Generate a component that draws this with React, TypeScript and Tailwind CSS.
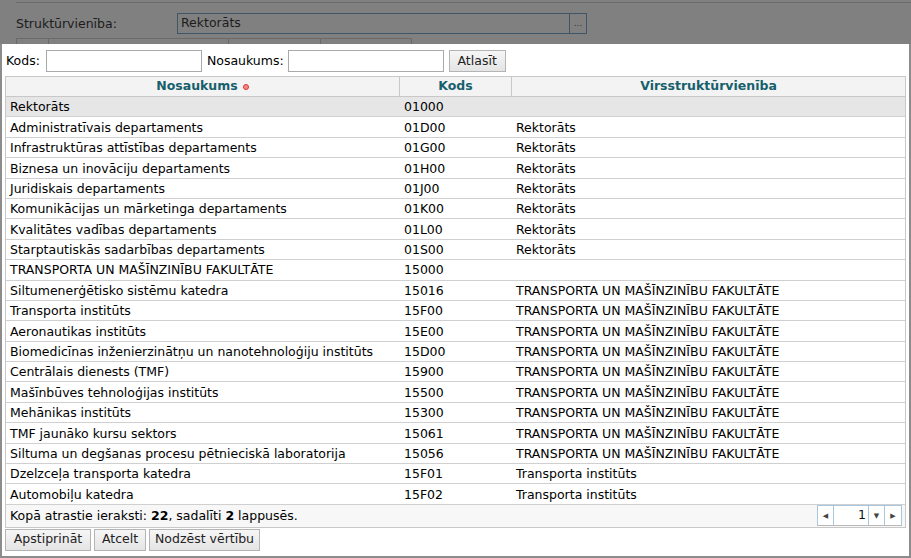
import React from 'react'

const ROWS: [string, string, string][] = [
  ['Rektorāts', '01000', ''],
  ['Administratīvais departaments', '01D00', 'Rektorāts'],
  ['Infrastruktūras attīstības departaments', '01G00', 'Rektorāts'],
  ['Biznesa un inovāciju departaments', '01H00', 'Rektorāts'],
  ['Juridiskais departaments', '01J00', 'Rektorāts'],
  ['Komunikācijas un mārketinga departaments', '01K00', 'Rektorāts'],
  ['Kvalitātes vadības departaments', '01L00', 'Rektorāts'],
  ['Starptautiskās sadarbības departaments', '01S00', 'Rektorāts'],
  ['TRANSPORTA UN MAŠĪNZINĪBU FAKULTĀTE', '15000', ''],
  ['Siltumenerģētisko sistēmu katedra', '15016', 'TRANSPORTA UN MAŠĪNZINĪBU FAKULTĀTE'],
  ['Transporta institūts', '15F00', 'TRANSPORTA UN MAŠĪNZINĪBU FAKULTĀTE'],
  ['Aeronautikas institūts', '15E00', 'TRANSPORTA UN MAŠĪNZINĪBU FAKULTĀTE'],
  ['Biomedicīnas inženierzinātņu un nanotehnoloģiju institūts', '15D00', 'TRANSPORTA UN MAŠĪNZINĪBU FAKULTĀTE'],
  ['Centrālais dienests (TMF)', '15900', 'TRANSPORTA UN MAŠĪNZINĪBU FAKULTĀTE'],
  ['Mašīnbūves tehnoloģijas institūts', '15500', 'TRANSPORTA UN MAŠĪNZINĪBU FAKULTĀTE'],
  ['Mehānikas institūts', '15300', 'TRANSPORTA UN MAŠĪNZINĪBU FAKULTĀTE'],
  ['TMF jaunāko kursu sektors', '15061', 'TRANSPORTA UN MAŠĪNZINĪBU FAKULTĀTE'],
  ['Siltuma un degšanas procesu pētnieciskā laboratorija', '15056', 'TRANSPORTA UN MAŠĪNZINĪBU FAKULTĀTE'],
  ['Dzelzceļa transporta katedra', '15F01', 'Transporta institūts'],
  ['Automobiļu katedra', '15F02', 'Transporta institūts'],
]

function Btn({ children, className = '' }: { children: React.ReactNode; className?: string }) {
  return (
    <button
      className={`h-[22px] whitespace-nowrap border border-[#b4b4b4] bg-gradient-to-b from-[#f6f6f6] to-[#e4e4e4] px-0 text-[12.5px] text-[#222] ${className}`}
    >
      {children}
    </button>
  )
}

export default function App() {
  return (
    <div
      className="flex h-[558px] w-[911px] flex-col overflow-hidden bg-[#808080] text-[12.5px] text-black"
      style={{ fontFamily: '"DejaVu Sans", Verdana, sans-serif' }}
    >
      {/* Page behind the modal (dimmed) */}
      <div className="h-[44px] shrink-0 overflow-hidden pt-[2px]">
        <div className="ml-[16px] h-[1px] bg-[#6a6a6a]" />
        <div className="mt-[10px] flex items-center">
          <span className="ml-[16px] w-[161px] pt-[2px] text-[#1c1c1c]">Struktūrvienība:</span>
          <div className="flex h-[21px] w-[393px] items-center border border-[#3f5668] pl-[3px] text-[#1c1c1c]">
            Rektorāts
          </div>
          <div className="flex h-[21px] w-[17px] items-center justify-center border border-l-0 border-[#3f5668] text-[9px] leading-none text-[#333]">
            ...
          </div>
        </div>
        <div className="ml-[16px] mt-[4px] flex h-[10px]">
          <div className="w-[33px] border border-[#6a6a6a]" />
          <div className="w-[180px] border border-l-0 border-[#6a6a6a]" />
          <div className="w-[92px] border border-l-0 border-[#6a6a6a]" />
          <div className="w-[91px] border border-l-0 border-[#6a6a6a]" />
        </div>
      </div>

      {/* Modal */}
      <div className="flex w-[911px] flex-1 flex-col border-x-2 border-b-2 border-[#8c8c8c] bg-white pl-[3px] pr-[2px]">
        {/* Search */}
        <div className="mt-[6px] flex h-[22px] items-center">
          <span className="ml-[1px] mr-[6px]">Kods:</span>
          <input className="h-[22px] w-[156px] border border-[#a9a9a9] bg-white" />
          <span className="ml-[5px] mr-[4px]">Nosaukums:</span>
          <input className="h-[22px] w-[156px] border border-[#a9a9a9] bg-white" />
          <Btn className="ml-[5px] w-[57px]">Atlasīt</Btn>
        </div>

        {/* Table */}
        <div className="mt-[4px] w-[901px] border-x border-[#c8c8c8]">
          <div className="flex h-[21px] border-y border-[#c8c8c8] bg-[#f3f3f3] font-bold text-[#175f6c]">
            <div className="flex w-[394px] items-center justify-center border-r border-[#c8c8c8]">
              Nosaukums
              <span className="ml-[5px] inline-block h-[6px] w-[6px] rounded-full border border-[#d33] bg-[#f78a8a]" />
            </div>
            <div className="flex w-[112px] items-center justify-center border-r border-[#c8c8c8]">Kods</div>
            <div className="flex flex-1 items-center justify-center">Virsstruktūrvienība</div>
          </div>
          {ROWS.map((r, i) => (
            <div
              key={i}
              className={`flex h-[20.4px] items-center border-b border-[#d0d0d0] pt-[2px] ${i === 0 ? 'bg-[#e6e6e6]' : 'bg-white'}`}
            >
              <div className="w-[394px] truncate pl-[4px]">{r[0]}</div>
              <div className="w-[112px] pl-[4px]">{r[1]}</div>
              <div className="flex-1 pl-[4px]">{r[2]}</div>
            </div>
          ))}
          {/* Footer / pager */}
          <div className="flex h-[23px] items-center justify-between border-b border-[#c8c8c8] bg-[#f7f7f7] pl-[4px] pr-[3px]">
            <span className="pt-[2px]">
              Kopā atrastie ieraksti: <b>22</b>, sadalīti <b>2</b> lappusēs.
            </span>
            <div className="flex h-[21px] items-stretch border border-[#a8c6de] border-b-[#b8b8b8] bg-white text-[#111]">
              <div className="flex w-[16px] items-center justify-center border-r border-[#a8c6de] text-[7px] text-[#444]">◀</div>
              <div className="flex w-[34px] items-center justify-end pr-[2px]">1</div>
              <div className="flex w-[17px] items-center justify-center border-x border-[#a8c6de] text-[7px] text-[#444]">▼</div>
              <div className="flex w-[16px] items-center justify-center text-[7px] text-[#444]">▶</div>
            </div>
          </div>
        </div>

        {/* Buttons */}
        <div className="mt-[1px] flex gap-[3px]">
          <Btn className="w-[86px]">Apstiprināt</Btn>
          <Btn className="w-[52px]">Atcelt</Btn>
          <Btn className="w-[111px]">Nodzēst vērtību</Btn>
        </div>
      </div>
    </div>
  )
}
